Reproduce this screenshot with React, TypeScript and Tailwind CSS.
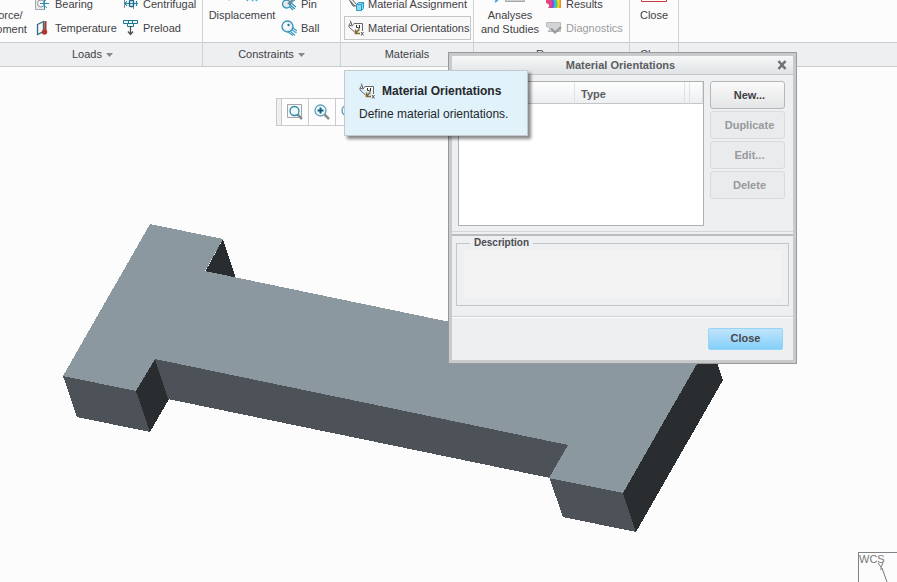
import type { ReactNode } from 'react'
import { clsx } from 'clsx'

interface ChildrenProps {
  children: ReactNode
}

function Icon16({ children }: ChildrenProps) {
  return (
    <svg width="16" height="16" viewBox="0 0 16 16" fill="none" className="shrink-0" aria-hidden="true">
      {children}
    </svg>
  )
}

function Icon32({ children }: { children?: ReactNode }) {
  return (
    <svg width="32" height="32" viewBox="0 0 32 32" fill="none" className="shrink-0" aria-hidden="true">
      {children}
    </svg>
  )
}

const BearingIcon = () => (
  <Icon16>
    <path d="M0.5 1.5H9.5V13.5H0.5Z" fill="#e9ebec" stroke="#a3a7aa" />
    <circle cx="6" cy="7.5" r="3.5" fill="#f7f9fa" stroke="#8d9296" />
    <path d="M9.5 1V13.5M5 7.5H14M12 3L8 6.5M12 12L8 8.500" stroke="#2f8fb5" />
  </Icon16>
)

const TemperatureIcon = () => (
  <Icon16>
    <path d="M2.5 4.5L8.5 1.5V11.5L2.5 14.5Z" fill="#f4f6f7" stroke="#2a6d85" strokeWidth="1.3" />
    <path d="M10.5 1V11" stroke="#a93a30" strokeWidth="2" />
    <path d="M9 2.5V10" stroke="#5b5f63" />
    <circle cx="9.5" cy="12" r="2.7" fill="#b5362c" />
  </Icon16>
)

const CentrifugalIcon = () => (
  <Icon16>
    <path d="M1.5 0V12M10.5 2V13" stroke="#7f868a" />
    <path d="M1 7.5H15M13.5 5V10M4 5L2 7.5L4 10" stroke="#2583a8" strokeWidth="1.2" />
    <rect x="6.5" y="4.5" width="4" height="6" rx="1" stroke="#1b6a8c" strokeWidth="1.4" />
  </Icon16>
)

const PreloadIcon = () => (
  <Icon16>
    <path d="M0.5 0.5H14.5V3.5H0.5Z" fill="#eaf5fa" stroke="#1f7697" />
    <path d="M4.5 3.5H10.5V6.5H4.5ZM5.5 0.5V4M9.5 0.5V4" fill="#eaf5fa" stroke="#1f7697" />
    <path d="M7.5 6V14M5 11.5L7.5 14.5L10 11.5" stroke="#4b5054" strokeWidth="1.3" />
  </Icon16>
)

const PinIcon = () => (
  <Icon16>
    <path d="M8 8L14 13M8 10L12 14M10 7L15 11" stroke="#2f93bd" strokeWidth="1.2" />
    <circle cx="5.5" cy="8" r="4" fill="#e6e9eb" stroke="#2f93bd" strokeWidth="1.3" />
    <path d="M7 8L14 2" stroke="#7d8285" strokeWidth="2" />
    <path d="M8 9L15 3" stroke="#2f93bd" />
  </Icon16>
)

const BallIcon = () => (
  <Icon16>
    <path d="M10 9L15.5 13M9 11L14 15.5M7 12L12 15.5M11 7L16 11" stroke="#3f9fc6" strokeWidth="1.1" />
    <circle cx="6.5" cy="6.5" r="5.5" fill="#e5e8ea" stroke="#2f93bd" strokeWidth="1.3" />
    <circle cx="6" cy="6" r="3.5" fill="#fbfcfc" />
    <path d="M7.5 3.5L9 5L7.5 6.500L6 5Z" fill="#24708f" />
  </Icon16>
)

const AssignmentIcon = () => (
  <Icon16>
    <path d="M2 0L0.5 3L7 10M3 2L9 9M2 5L5 10H8" stroke="#55595d" />
    <path d="M8.5 8.5L10.5 6.5H15.5V12.5L13.5 14.5H8.5Z" fill="#8fdaf2" stroke="#2b9dc4" />
    <path d="M8.5 8.5H13.5V14.5M13.5 8.5L15.5 6.5" stroke="#2b9dc4" />
  </Icon16>
)

const OrientationIcon = () => (
  <Icon16>
    <path d="M2 0.5L3 2L1 5V7L6.5 12M3.5 2.5V5L6 7" stroke="#66696c" />
    <path d="M1 5L4 6L6 3.5H14.5V11" fill="#f6f6f4" stroke="#66696c" />
    <path d="M8.5 5V7.500H10.500M11.5 5V8L10 9.500" stroke="#2e3033" />
    <path d="M11.5 9.500L7.5 13M7.5 9.5V13.5H12" stroke="#84682f" strokeWidth="1.6" />
    <path d="M13 12L15.5 15.5M15.5 12L13 15.5" stroke="#55585b" />
  </Icon16>
)

const ResultsIcon = () => (
  <Icon16>
    <path d="M0 2H15V12H2Q5 8 0 7Z" fill="#e2457f" />
    <path d="M4 2H15V12H5Q8 7 4 2Z" fill="#8b4be0" />
    <path d="M6 2H15V12H7Q10 7 6 2Z" fill="#38b9e8" />
    <path d="M8 2H15V12H9Q12 7 8 2Z" fill="#63d04b" />
    <path d="M10 2H15V12H11Q13 7 10 2Z" fill="#f2e22e" />
    <path d="M13 2H15V12H13Q14 7 13 2Z" fill="#f08a2c" />
  </Icon16>
)

const DiagnosticsIcon = () => (
  <Icon16>
    <path d="M0.5 2.5H14.5V11.5H2Q6 8 0.5 6.5Z" fill="#d3d4d5" stroke="#b9bbbc" />
    <path d="M5 8.500L9 12.500L15 7" stroke="#98999b" strokeWidth="2.2" />
  </Icon16>
)

const DisplacementIcon = () => (
  <Icon32>
    <path d="M0 20L3 29L7 25Z" fill="#8b8f92" />
    <path d="M21 29L24 22L27 29M27 22L31 29" stroke="#5cb4df" strokeWidth="2" />
  </Icon32>
)

const AnalysesIcon = () => (
  <Icon32>
    <path d="M7 18Q6 27 1 30" stroke="#45a8d8" strokeWidth="2" />
    <path d="M11.5 10.5H30.5V29.5H11.5Z" fill="#cdcfd0" stroke="#a4a7a9" />
  </Icon32>
)

const CloseRedIcon = () => (
  <Icon32>
    <path d="M3.5 5.5H28.5V29.5H3.5Z" fill="#fff" stroke="#c8373a" />
  </Icon32>
)

const RefitIcon = () => (
  <Icon16>
    <path d="M0.5 0.5H14.5V13.5H0.5Z" fill="#f7f9fa" stroke="#a2a6a8" />
    <path d="M10.5 10.5L15 15" stroke="#8b8f92" strokeWidth="2.5" />
    <circle cx="7.5" cy="7" r="4.5" fill="#eef8fb" stroke="#2f86a8" strokeWidth="1.3" />
  </Icon16>
)

const ZoomInIcon = () => (
  <Icon16>
    <path d="M10 10L15 15" stroke="#8b8f92" strokeWidth="2.5" />
    <circle cx="6.5" cy="6.5" r="5.5" fill="#f1f9fc" stroke="#5aa0bb" strokeWidth="1.3" />
    <path d="M6.5 3.5V9.5M3.5 6.5H9.5" stroke="#12607f" strokeWidth="2" />
  </Icon16>
)

const ZoomOutIcon = () => (
  <Icon16>
    <path d="M10 10L15 15" stroke="#8b8f92" strokeWidth="2.5" />
    <circle cx="6.5" cy="6.5" r="5.5" fill="#f1f9fc" stroke="#5aa0bb" strokeWidth="1.3" />
    <path d="M3.5 6.5H9.5" stroke="#12607f" strokeWidth="2" />
  </Icon16>
)

interface RibbonGroupProps {
  label: string
  menu?: boolean
  className: string
  children: ReactNode
}

function RibbonGroup({ label, menu = false, className, children }: RibbonGroupProps) {
  return (
    <section className={clsx('flex shrink-0 flex-col border-r border-[#cfd1d4]', className)}>
      <div className="flex h-[42px] items-end overflow-hidden pb-[2px]">{children}</div>
      <h2 className="flex h-6 items-center justify-center gap-1 border-t border-[#c9cbce] bg-[#edeff1]">
        {label}
        {menu && (
          <svg width="7" height="4" viewBox="0 0 7 4" aria-hidden="true">
            <path d="M0 0H7L3.5 4Z" fill="#85888b" />
          </svg>
        )}
      </h2>
    </section>
  )
}

interface RibbonItemProps {
  icon: ReactNode
  label: string
  active?: boolean
  disabled?: boolean
}

function RibbonItem({ icon, label, active = false, disabled = false }: RibbonItemProps) {
  return (
    <button
      type="button"
      disabled={disabled}
      className={clsx(
        'flex h-6 shrink-0 items-center gap-1 border pl-[3px] whitespace-nowrap',
        active ? 'border-[#c3c6c9] bg-[#f8f8f9]' : 'border-transparent',
        disabled && 'text-[#9b9c9e]'
      )}
    >
      {icon}
      {label}
    </button>
  )
}

interface RibbonTileProps {
  icon: ReactNode
  lines: string[]
  className?: string
}

function RibbonTile({ icon, lines, className }: RibbonTileProps) {
  return (
    <button type="button" className={clsx('flex shrink-0 flex-col items-center gap-1 pb-1 leading-[14px]', className)}>
      {icon}
      <span className="flex h-7 flex-col whitespace-nowrap">
        {lines.map((line) => (
          <span key={line}>{line}</span>
        ))}
      </span>
    </button>
  )
}

interface RibbonColumnProps {
  className?: string
  children: ReactNode
}

function RibbonColumn({ className, children }: RibbonColumnProps) {
  return <div className={clsx('flex shrink-0 flex-col items-start', className)}>{children}</div>
}

function Ribbon() {
  return (
    <header className="flex overflow-hidden border-b border-[#c9cbce] bg-[#fcfcfc]">
      {/* scrolled slightly to the left, so the first group starts off screen */}
      <RibbonGroup label="Loads" menu className="-ml-[17px] w-[220px]">
        <RibbonTile icon={<Icon32 />} lines={['Force/', 'Moment']} className="w-12" />
        <RibbonColumn className="w-[88px]">
          <RibbonItem icon={<BearingIcon />} label="Bearing" />
          <RibbonItem icon={<TemperatureIcon />} label="Temperature" />
        </RibbonColumn>
        <RibbonColumn>
          <RibbonItem icon={<CentrifugalIcon />} label="Centrifugal" />
          <RibbonItem icon={<PreloadIcon />} label="Preload" />
        </RibbonColumn>
      </RibbonGroup>
      <RibbonGroup label="Constraints" menu className="w-[138px]">
        <RibbonTile icon={<DisplacementIcon />} lines={['Displacement']} className="w-[74px] pl-1" />
        <RibbonColumn>
          <RibbonItem icon={<PinIcon />} label="Pin" />
          <RibbonItem icon={<BallIcon />} label="Ball" />
        </RibbonColumn>
      </RibbonGroup>
      <RibbonGroup label="Materials" className="w-[133px]">
        <RibbonColumn className="pl-[3px]">
          <RibbonItem icon={<AssignmentIcon />} label="Material Assignment" />
          <RibbonItem icon={<OrientationIcon />} label="Material Orientations" active />
        </RibbonColumn>
      </RibbonGroup>
      <RibbonGroup label="Run" menu className="w-[156px]">
        <RibbonTile icon={<AnalysesIcon />} lines={['Analyses', 'and Studies']} className="w-[68px] pl-1" />
        <RibbonColumn>
          <RibbonItem icon={<ResultsIcon />} label="Results" />
          <RibbonItem icon={<DiagnosticsIcon />} label="Diagnostics" disabled />
        </RibbonColumn>
      </RibbonGroup>
      <RibbonGroup label="Close" className="w-[49px]">
        <RibbonTile icon={<CloseRedIcon />} lines={['Close']} className="w-full" />
      </RibbonGroup>
      <div className="flex flex-1 flex-col">
        <div className="h-[42px]" />
        <div className="h-6 border-t border-[#c9cbce] bg-[#edeff1]" />
      </div>
    </header>
  )
}

function BeamModel() {
  return (
    <svg width="897" height="515" viewBox="0 67 897 515" shapeRendering="crispEdges" role="img" aria-label="Part">
      <g fill="#292d2f">
        <path d="M223 239L236 278L205 272Z" />
        <path d="M136 391L155 359L169 399L150 432Z" />
        <path d="M623 493L710 341L723 380L636 532Z" />
      </g>
      <g fill="#4d5259">
        <path d="M63 376L136 391L150 432L77 417Z" />
        <path d="M155 359L568 445L550 478L168 399Z" />
        <path d="M549 477L623 493L636 532L563 517Z" />
      </g>
      <path
        d="M150 224L223 239L205 271L618 357L637 325L710 341L623 493L549 478L568 445L155 359L136 391L63 376Z"
        fill="#8c989f"
      />
    </svg>
  )
}

const VIEW_TOOLS = [
  { label: 'Refit', icon: <RefitIcon /> },
  { label: 'Zoom In', icon: <ZoomInIcon /> },
  { label: 'Zoom Out', icon: <ZoomOutIcon /> },
]

function ViewToolbar() {
  return (
    <div className="absolute top-[31px] left-[276px] flex h-7 border border-[#c9cbce] bg-[#fdfdfd]">
      <div className="w-1 bg-[#edeff1]" />
      {VIEW_TOOLS.map(({ label, icon }) => (
        <button
          key={label}
          type="button"
          aria-label={label}
          className="flex w-[27px] items-center justify-center border-l border-[#c9cbce]"
        >
          {icon}
        </button>
      ))}
    </div>
  )
}

function CoordinateSystem() {
  return (
    <div className="absolute right-0 bottom-0 h-[30px] w-[39px] border-t border-l border-[#808284] text-[#77797b]">
      <p className="text-[11px] leading-[13px]">WCS</p>
      <svg width="14" height="19" viewBox="0 0 14 19" className="absolute top-[10px] left-[18px]" aria-hidden="true">
        <path d="M1 0L4 4L6 0M4 4V7M5 5L10 19" stroke="#77797b" fill="none" />
      </svg>
    </div>
  )
}

function Tooltip() {
  return (
    <div
      role="tooltip"
      className="absolute top-[70px] left-[344px] flex h-[66px] w-[184px] flex-col gap-[3px] border border-[#c3c9cd] bg-[#e1f2fb] px-[14px] pt-[10px] text-[12px] text-[#25282b] shadow-[3px_3px_3px_#0007]"
    >
      <div className="flex h-5 items-center gap-[7px] font-bold">
        <OrientationIcon />
        Material Orientations
      </div>
      <p className="h-5 leading-5 whitespace-nowrap">Define material orientations.</p>
    </div>
  )
}

const ACTIONS = [
  { label: 'New...', disabled: false },
  { label: 'Duplicate', disabled: true },
  { label: 'Edit...', disabled: true },
  { label: 'Delete', disabled: true },
]

function OrientationsDialog() {
  return (
    <div
      role="dialog"
      aria-label="Material Orientations"
      className="absolute top-[52px] left-[448px] w-[349px] border border-[#97999b] bg-[#c8cacc] p-[3px] text-[11px]"
    >
      <div className="flex flex-col bg-[#edeff1]">
        <div className="flex h-[19px] items-center border-b border-[#c3c7c9] bg-linear-to-b from-[#f6f7f7] to-[#e0e4e6] pr-[6px] pl-3">
          <h1 className="flex-1 text-center font-bold text-[#5b5d61]">Material Orientations</h1>
          <button type="button" aria-label="Close dialog">
            <svg width="10" height="10" viewBox="0 0 10 10" aria-hidden="true">
              <path d="M1.5 1L8.5 9M8.5 1L1.5 9" stroke="#6f7276" strokeWidth="2.6" />
            </svg>
          </button>
        </div>

        <div className="flex gap-[6px] border-b border-[#d3d6d8] pt-[6px] pr-2 pb-[5px] pl-[6px]">
          <div className="h-[145px] flex-1 border border-[#aeb1b3] bg-white">
            <table className="w-full table-fixed border-separate border-spacing-0">
              <thead>
                <tr className="h-[21px] bg-linear-to-b from-[#fdfdfd] to-[#eceef0] text-left text-[#5b5d61] [&>th]:border-b [&>th]:border-b-[#c3c6c8]">
                  <th aria-label="Name" className="w-[116px] border-r border-r-[#dfe1e3]" />
                  <th className="border-r border-r-[#dfe1e3] px-[6px] pt-1">Type</th>
                  <th className="w-[5px] border-r border-r-[#dfe1e3]" />
                  <th className="w-[13px] border-r border-r-[#dfe1e3]" />
                </tr>
              </thead>
            </table>
          </div>
          <div className="flex w-[75px] flex-col gap-[2px]">
            {ACTIONS.map(({ label, disabled }) => (
              <button
                key={label}
                type="button"
                disabled={disabled}
                className={clsx(
                  'h-7 rounded-[3px] border pl-1 font-bold',
                  disabled
                    ? 'border-[#d8dadc] bg-[#e9ebec] text-[#97999b]'
                    : 'border-[#b4b6b8] bg-linear-to-b from-[#fafafa] to-[#e4e5e6] text-[#3f4043]'
                )}
              >
                {label}
              </button>
            ))}
          </div>
        </div>
        <div className="h-1 border-b-2 border-[#b9bdc0]" />

        <div className="px-1 pb-[10px]">
          <fieldset className="border border-[#c3c6c8] px-[7px] pb-[7px]">
            <legend className="ml-[6px] px-1 text-[10px] leading-[14px] font-bold text-[#4a4c50]">Description</legend>
            <div className="h-[48px] bg-[#f3f3f3]" />
          </fieldset>
        </div>

        <div className="flex h-[44px] items-center justify-end border-t border-[#cfd2d4] pr-[10px] shadow-[inset_0_1px_0_#fff]">
          <button
            type="button"
            className="h-[22px] w-[75px] rounded-[2px] border border-[#96d3f5] bg-linear-to-b from-[#bfe4fa] to-[#84cffa] font-bold text-[#46494c]"
          >
            Close
          </button>
        </div>
      </div>
    </div>
  )
}

export default function App() {
  return (
    <div className="relative flex min-h-screen flex-col overflow-hidden bg-[#fcfcfc] font-['Liberation_Sans',Arial,sans-serif] text-[11px] text-[#3f4145]">
      <Ribbon />
      <main className="relative flex-1 overflow-hidden">
        <BeamModel />
        <ViewToolbar />
        <CoordinateSystem />
      </main>
      <OrientationsDialog />
      <Tooltip />
    </div>
  )
}
